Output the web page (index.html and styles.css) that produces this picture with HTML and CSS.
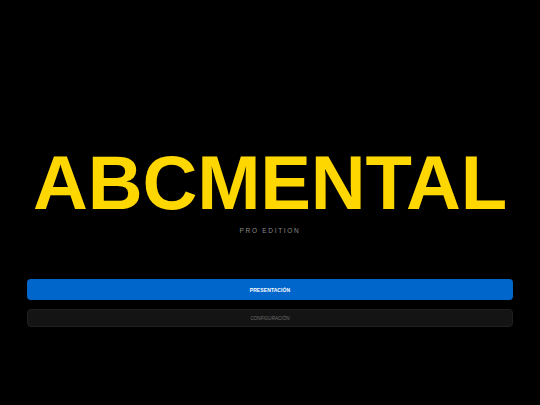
FILE: index.html
```html
<!DOCTYPE html>
<html lang="es">
<head>
<meta charset="utf-8">
<title>ABCMENTAL</title>
<link rel="stylesheet" href="styles.css">
</head>
<body>
<main class="screen">
  <header class="brand">
    <h1 class="title">ABCMENTAL</h1>
    <p class="edition">PRO EDITION</p>
  </header>
  <nav class="menu">
    <button class="btn btn-primary">PRESENTACIÓN</button>
    <button class="btn btn-secondary">CONFIGURACIÓN</button>
  </nav>
</main>
</body>
</html>
```
FILE: styles.css
```css
html, body {
  margin: 0;
  padding: 0;
  background: #000;
  height: 100%;
}
body {
  font-family: "Liberation Sans", Arial, sans-serif;
}
.screen {
  display: flex;
  flex-direction: column;
  padding: 0 27px;
  box-sizing: border-box;
  height: 405px;
}
.brand {
  display: flex;
  flex-direction: column;
  align-items: center;
  padding-top: 141px;
}
.title {
  margin: 0;
  font-size: 76px;
  font-weight: 700;
  color: #ffd700;
  letter-spacing: -0.2px;
  line-height: 84px;
}
.edition {
  margin: 1px 0 0;
  font-size: 6.5px;
  letter-spacing: 1.7px;
  color: #8a8a8a;
  line-height: 10px;
}
.menu {
  display: flex;
  flex-direction: column;
  gap: 9px;
  margin-top: 43px;
}
.btn {
  font-family: "Liberation Sans", Arial, sans-serif;
  font-weight: 700;
  border-radius: 4px;
  width: 100%;
  padding: 0;
  cursor: pointer;
}
.btn-primary {
  height: 21px;
  background: #0066cc;
  border: none;
  color: #fff;
  font-size: 5px;
  letter-spacing: 0.1px;
}
.btn-secondary {
  height: 18px;
  background: #141414;
  border: 1px solid #1f1f1f;
  color: #707070;
  font-size: 4.6px;
  font-weight: 400;
  letter-spacing: 0;
}
```
